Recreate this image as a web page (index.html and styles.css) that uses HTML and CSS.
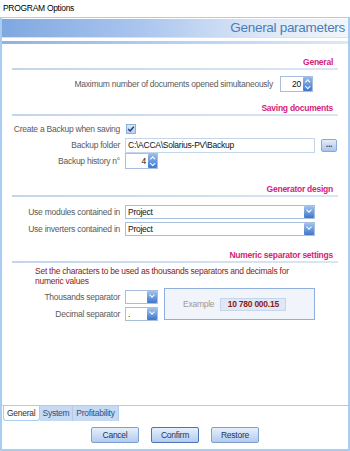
FILE: index.html
```html
<!DOCTYPE html>
<html>
<head>
<title>PROGRAM Options</title>
<link rel="stylesheet" href="styles.css">
</head>
<body>
<div class="TitleBar">PROGRAM Options</div>
<div class="Window">
   <div class="Header">General parameters</div>
   <div class="Stripe"></div>
   <div class="Panel">

      <div class="Section First">General</div>
      <div class="Rule"></div>
      <div class="Row RowWide">
         <span class="Label">Maximum number of documents opened simultaneously</span>
         <span class="Spin"><span class="Value">20</span><span class="SpinBtn"><i class="Up"></i><i class="Down"></i></span></span>
      </div>

      <div class="Section Gap10">Saving documents</div>
      <div class="Rule"></div>
      <div class="Block5">
         <div class="Row">
            <span class="Label">Create a Backup when saving</span>
            <span class="Check"><svg width="8" height="8" viewBox="0 0 8 8"><path d="M1.2 4 L3.2 6 L6.8 1.8" fill="none" stroke="#1d3f86" stroke-width="1.5"/></svg></span>
         </div>
         <div class="Row">
            <span class="Label">Backup folder</span>
            <span class="Text">C:\ACCA\Solarius-PV\Backup</span>
            <span class="Dots">...</span>
         </div>
         <div class="Row">
            <span class="Label">Backup history n°</span>
            <span class="Spin"><span class="Value">4</span><span class="SpinBtn"><i class="Up"></i><i class="Down"></i></span></span>
         </div>
      </div>

      <div class="Section Gap14">Generator design</div>
      <div class="Rule"></div>
      <div class="Block6">
         <div class="Row Tall">
            <span class="Label">Use modules contained in</span>
            <span class="Combo Long"><span class="ComboText">Project</span><span class="Drop"></span></span>
         </div>
         <div class="Row Tall">
            <span class="Label">Use inverters contained in</span>
            <span class="Combo Long"><span class="ComboText">Project</span><span class="Drop"></span></span>
         </div>
      </div>

      <div class="Section Gap12">Numeric separator settings</div>
      <div class="Rule"></div>
      <div class="Note">Set the characters to be used as thousands separators and decimals for numeric values</div>
      <div class="SepArea">
         <div class="SepRows">
            <div class="Row Tall">
               <span class="Label">Thousands separator</span>
               <span class="Combo Short"><span class="ComboText"></span><span class="Drop"></span></span>
            </div>
            <div class="Row Tall">
               <span class="Label">Decimal separator</span>
               <span class="Combo Short"><span class="ComboText">.</span><span class="Drop"></span></span>
            </div>
         </div>
         <div class="Example">
            <span class="ExLabel">Example</span>
            <span class="ExValue">10 780 000.15</span>
         </div>
      </div>

   </div>
   <div class="Tabs">
      <span class="Tab Active">General</span>
      <span class="Tab">System</span>
      <span class="Tab">Profitability</span>
   </div>
   <div class="Buttons">
      <span class="Button">Cancel</span>
      <span class="Button Default">Confirm</span>
      <span class="Button">Restore</span>
   </div>
</div>
</body>
</html>
```
FILE: styles.css
```css
html, body
{
   margin: 0;
   padding: 0;
   background: white;
}
body
{
   width: 350px;
   height: 451px;
   font-family: 'Liberation Sans', Arial, sans-serif;
   font-size: 8.5px;
   letter-spacing: -0.25px;
   color: #5a5a5a;
   overflow: hidden;
}
.TitleBar
{
   height: 17px;
   line-height: 17px;
   padding-left: 3px;
   font-size: 8.5px;
   letter-spacing: -0.3px;
   color: #000;
}
.Window
{
   height: 431px;
   border: 2px solid #a8ccf2;
   border-top: 1px solid #a8ccf2;
   display: flex;
   flex-direction: column;
}
.Header
{
   height: 18px;
   line-height: 18px;
   margin-top: 1px;
   padding-right: 3px;
   text-align: right;
   font-size: 13.5px;
   letter-spacing: -0.3px;
   color: #4b7cb8;
   background: linear-gradient(to right, #7fa8e1, #aac5ee 40%, #dce7f7 75%, #f2f6fc);
   border-bottom: 1px solid #d5e2f4;
}
.Stripe
{
   height: 3px;
   margin-top: 3px;
   background: linear-gradient(to right, #8fb2e5, #b7cff1 50%, #dde8f7);
}
.Panel
{
   flex: 1;
   padding: 0 10px 0 8px;
   border-bottom: 1px solid #a8ccf2;
}
.Section
{
   height: 12px;
   line-height: 12px;
   text-align: right;
   padding-right: 5px;
   font-weight: bold;
   color: #d4237a;
}
.First  { margin-top: 12px; }
.Gap10  { margin-top: 10px; }
.Gap12  { margin-top: 12px; }
.Gap14  { margin-top: 14px; }
.Block5 { margin-top: 5px; }
.Block6 { margin-top: 6px; }
.Rule
{
   height: 2px;
   margin: 0 0 0 2px;
   background: linear-gradient(to right, #c3d5ec, #dbe6f4);
}
.Row
{
   display: flex;
   align-items: center;
   height: 16px;
}
.Tall
{
   height: 17px;
}
.Label
{
   width: 110px;
   text-align: right;
   margin-right: 5px;
   white-space: nowrap;
}
.RowWide
{
   margin-top: 6px;
}
.RowWide .Label
{
   width: 263px;
   margin-right: 7px;
}
.Spin
{
   display: flex;
   width: 31px;
   height: 14px;
   border: 1px solid #a7bedc;
   background: white;
}
.Value
{
   flex: 1;
   text-align: right;
   line-height: 14px;
   padding-right: 2px;
   color: #111;
}
.SpinBtn
{
   width: 9px;
   display: flex;
   flex-direction: column;
   background: linear-gradient(#94baec, #3f78cf);
   border-radius: 1px;
}
.SpinBtn i
{
   flex: 1;
   position: relative;
}
.SpinBtn i::after
{
   content: '';
   position: absolute;
   left: 2.5px;
   width: 2.5px;
   height: 2.5px;
   border-left: 1px solid white;
   border-top: 1px solid white;
}
.Up::after
{
   top: 2.5px;
   transform: rotate(45deg);
}
.Down::after
{
   top: 0.5px;
   transform: rotate(225deg);
}
.Check
{
   width: 8px;
   height: 8px;
   margin-left: 1px;
   border: 1px solid #8eb0dc;
   background: linear-gradient(#dbe7f7, #b9cfee);
   display: flex;
}
.Text
{
   width: 186px;
   height: 13px;
   line-height: 13px;
   border: 1px solid #c6d6ea;
   background: white;
   color: #111;
   padding-left: 2px;
}
.Dots
{
   width: 14px;
   height: 11px;
   margin-left: 6px;
   line-height: 8px;
   text-align: center;
   border: 1px solid #8aa8d6;
   border-radius: 2px;
   background: linear-gradient(#e2ecfa, #a9c5ee);
   color: #1d3f86;
   font-weight: bold;
}
.Combo
{
   display: flex;
   height: 12px;
   border: 1px solid #a7bedc;
   background: white;
}
.ComboText
{
   flex: 1;
   line-height: 12px;
   padding-left: 2px;
   color: #111;
}
.Drop
{
   width: 10px;
   position: relative;
   background: linear-gradient(#a3c3ef, #3d76cd);
   border-radius: 1px;
}
.Drop::after
{
   content: '';
   position: absolute;
   left: 3px;
   top: 2.5px;
   width: 3px;
   height: 3px;
   border-right: 1.5px solid white;
   border-bottom: 1.5px solid white;
   transform: rotate(45deg);
}
.Long
{
   width: 188px;
}
.Short
{
   width: 31px;
}
.Note
{
   margin: 3px 0 0 25px;
   line-height: 10px;
   color: #8b1a1a;
   width: 260px;
}
.SepArea
{
   display: flex;
   margin-top: 2px;
}
.Example
{
   margin-left: 6px;
   width: 149px;
   height: 30px;
   border: 1px solid #8fb0dd;
   background: #f1f5fb;
   display: flex;
   align-items: center;
}
.ExLabel
{
   margin-left: 18px;
   color: #9a9a9a;
}
.ExValue
{
   margin-left: 6px;
   width: 64px;
   height: 11px;
   line-height: 11px;
   text-align: center;
   background: #dfe8f5;
   border: 1px solid #c6d6ea;
   color: #8b1a1a;
   font-weight: bold;
}
.Tabs
{
   display: flex;
   padding-left: 1px;
   height: 15px;
}
.Tab
{
   padding: 0 3px;
   line-height: 14px;
   background: #c6daf3;
   border-right: 1px solid #b3cbea;
   color: #2f4f80;
}
.Tab.Active
{
   background: white;
   color: #333;
   border: 1px solid #a8ccf2;
   border-top: none;
   border-radius: 0 0 3px 3px;
}
.Buttons
{
   display: flex;
   justify-content: center;
   gap: 12px;
   margin-top: 6px;
   padding-bottom: 6px;
}
.Button
{
   width: 46px;
   height: 14px;
   line-height: 14px;
   text-align: center;
   border: 1px solid #7f9fd1;
   border-radius: 2px;
   background: linear-gradient(#e6effb, #b3cbef);
   color: #1d3561;
}
.Default
{
   border-color: #4f72b5;
}
```
